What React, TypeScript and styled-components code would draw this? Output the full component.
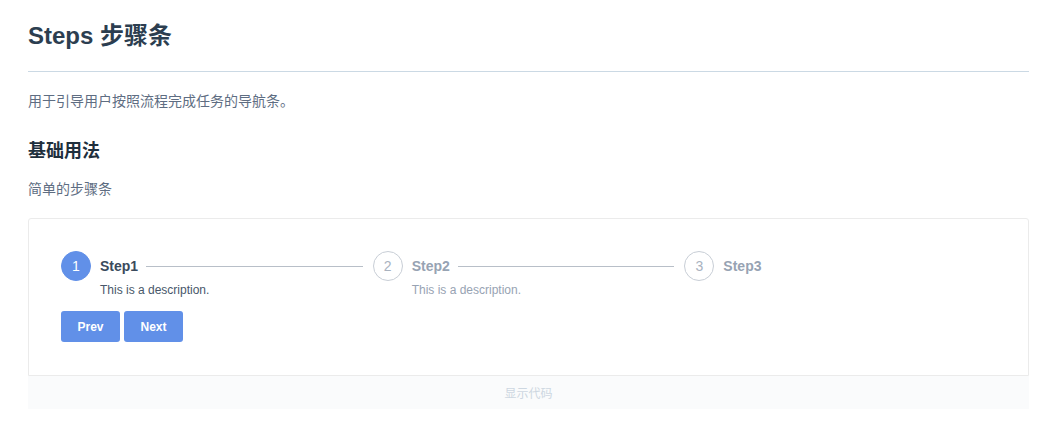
import React, { useState } from "react";
import styled, { createGlobalStyle } from "styled-components";

const GlobalStyle = createGlobalStyle`
  html, body {
    margin: 0;
    padding: 0;
    background: #fff;
  }
  body {
    font-family: "Liberation Sans", Arial, "Noto Sans CJK SC", sans-serif;
  }
`;

const Page = styled.div`
  padding: 16px 20px 0 28px;
  color: #2c3e50;
`;

const Title = styled.h2`
  margin: 0;
  font-size: 24px;
  line-height: 40px;
  font-weight: bold;
  color: #2c3e50;
`;

const Divider = styled.div`
  height: 1px;
  background: #cbd9e4;
  margin-top: 15px;
`;

const Text = styled.p`
  margin: 0;
  font-size: 14px;
  line-height: 22px;
  color: #5e6d82;
`;

const Lead = styled(Text)`
  margin-top: 18px;
`;

const SubTitle = styled.h3`
  margin: 26px 0 0;
  font-size: 18px;
  line-height: 26px;
  font-weight: bold;
  color: #1f2f3d;
`;

const Hint = styled(Text)`
  margin-top: 14px;
`;

const Demo = styled.div`
  margin-top: 18px;
`;

const DemoBody = styled.div`
  padding: 32px 32px 33px;
  border: 1px solid #ebebeb;
  border-radius: 3px 3px 0 0;
`;

const Steps = styled.div`
  display: flex;
`;

const Step = styled.div`
  flex: 1 1 0;
  min-width: 0;
`;

const StepHead = styled.div`
  display: flex;
  align-items: center;
  height: 30px;
`;

const Circle = styled.div<{ $active: boolean }>`
  box-sizing: border-box;
  width: 30px;
  height: 30px;
  flex: none;
  border-radius: 50%;
  display: flex;
  align-items: center;
  justify-content: center;
  font-size: 14px;
  background: ${(p) => (p.$active ? "#6190e8" : "#fff")};
  border: 1px solid ${(p) => (p.$active ? "#6190e8" : "#c8ced6")};
  color: ${(p) => (p.$active ? "#fff" : "#a9b2bf")};
`;

const StepTitle = styled.div<{ $active: boolean }>`
  margin-left: 9px;
  font-size: 14px;
  font-weight: bold;
  color: ${(p) => (p.$active ? "#3a4a5c" : "#97a3b3")};
  white-space: nowrap;
`;

const Line = styled.div`
  flex: 1;
  height: 1px;
  background: #b8bfc8;
  margin: 0 10px 0 8px;
`;

const Desc = styled.div<{ $active: boolean }>`
  margin-top: 1px;
  padding-left: 39px;
  font-size: 12px;
  line-height: 16px;
  color: ${(p) => (p.$active ? "#48576a" : "#97a3b3")};
`;

const Buttons = styled.div`
  display: flex;
  gap: 4px;
  margin-top: 13px;
`;

const Button = styled.button`
  width: 59px;
  height: 31px;
  border: none;
  border-radius: 3px;
  background: #6190e8;
  color: #fff;
  font-family: "Liberation Sans", Arial, sans-serif;
  font-size: 12px;
  font-weight: bold;
  cursor: pointer;
  padding: 0;
`;

const Footer = styled.div`
  height: 33px;
  background: #fafbfc;
  display: flex;
  align-items: center;
  justify-content: center;
  font-size: 12px;
  color: #cdd7e1;
`;

const items = [
  { title: "Step1", desc: "This is a description." },
  { title: "Step2", desc: "This is a description." },
  { title: "Step3", desc: "" },
];

const App = () => {
  const [active, setActive] = useState(0);
  return (
    <Page>
      <GlobalStyle />
      <Title>Steps 步骤条</Title>
      <Divider />
      <Lead>用于引导用户按照流程完成任务的导航条。</Lead>
      <SubTitle>基础用法</SubTitle>
      <Hint>简单的步骤条</Hint>
      <Demo>
        <DemoBody>
          <Steps>
            {items.map((s, i) => (
              <Step key={s.title}>
                <StepHead>
                  <Circle $active={i <= active}>{i + 1}</Circle>
                  <StepTitle $active={i <= active}>{s.title}</StepTitle>
                  {i < items.length - 1 && <Line />}
                </StepHead>
                <Desc $active={i <= active}>{s.desc || "\u00a0"}</Desc>
              </Step>
            ))}
          </Steps>
          <Buttons>
            <Button onClick={() => setActive(Math.max(0, active - 1))}>Prev</Button>
            <Button onClick={() => setActive(Math.min(items.length - 1, active + 1))}>Next</Button>
          </Buttons>
        </DemoBody>
        <Footer>显示代码</Footer>
      </Demo>
    </Page>
  );
};

export default App;
